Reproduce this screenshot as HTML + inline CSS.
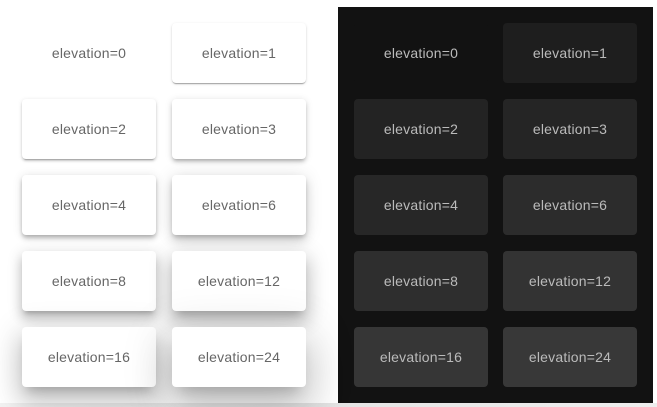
<!DOCTYPE html><html><head><style>
body{margin:0;width:657px;height:407px;background:#fff;position:relative;overflow:hidden;font-family:"Liberation Sans",sans-serif}
.p{position:absolute;width:134px;height:60px;border-radius:4px;display:flex;align-items:center;justify-content:center;font-size:14px;letter-spacing:0.2px}
.l{background:#fff;color:#666}
.d{color:#bbb}
#dk{position:absolute;left:338px;top:7px;width:315px;height:396px;background:#121212}
#bt{position:absolute;left:0;top:403px;width:657px;height:4px;background:linear-gradient(90deg,#f2f2f2,#e4e4e4 50%,#eee)}
</style></head><body>
<div id="bt"></div>
<div id="dk"></div>
<div class="p l" style="left:22px;top:23px">elevation=0</div>
<div class="p l" style="left:172px;top:23px;box-shadow:0 2px 1px -1px rgba(0,0,0,.2),0 1px 1px 0 rgba(0,0,0,.14),0 1px 3px 0 rgba(0,0,0,.12)">elevation=1</div>
<div class="p l" style="left:22px;top:99px;box-shadow:0 3px 1px -2px rgba(0,0,0,.2),0 2px 2px 0 rgba(0,0,0,.14),0 1px 5px 0 rgba(0,0,0,.12)">elevation=2</div>
<div class="p l" style="left:172px;top:99px;box-shadow:0 3px 3px -2px rgba(0,0,0,.2),0 3px 4px 0 rgba(0,0,0,.14),0 1px 8px 0 rgba(0,0,0,.12)">elevation=3</div>
<div class="p l" style="left:22px;top:175px;box-shadow:0 2px 4px -1px rgba(0,0,0,.2),0 4px 5px 0 rgba(0,0,0,.14),0 1px 10px 0 rgba(0,0,0,.12)">elevation=4</div>
<div class="p l" style="left:172px;top:175px;box-shadow:0 3px 5px -1px rgba(0,0,0,.2),0 6px 10px 0 rgba(0,0,0,.14),0 1px 18px 0 rgba(0,0,0,.12)">elevation=6</div>
<div class="p l" style="left:22px;top:251px;box-shadow:0 5px 5px -3px rgba(0,0,0,.2),0 8px 10px 1px rgba(0,0,0,.14),0 3px 14px 2px rgba(0,0,0,.12)">elevation=8</div>
<div class="p l" style="left:172px;top:251px;box-shadow:0 7px 8px -4px rgba(0,0,0,.2),0 12px 17px 2px rgba(0,0,0,.14),0 5px 22px 4px rgba(0,0,0,.12)">elevation=12</div>
<div class="p l" style="left:22px;top:327px;box-shadow:0 8px 10px -5px rgba(0,0,0,.2),0 16px 24px 2px rgba(0,0,0,.14),0 6px 30px 5px rgba(0,0,0,.12)">elevation=16</div>
<div class="p l" style="left:172px;top:327px;box-shadow:0 11px 15px -7px rgba(0,0,0,.2),0 24px 38px 3px rgba(0,0,0,.14),0 9px 46px 8px rgba(0,0,0,.12)">elevation=24</div>
<div class="p d" style="left:354px;top:23px;background:#121212">elevation=0</div>
<div class="p d" style="left:503px;top:23px;background:#1e1e1e">elevation=1</div>
<div class="p d" style="left:354px;top:99px;background:#232323">elevation=2</div>
<div class="p d" style="left:503px;top:99px;background:#252525">elevation=3</div>
<div class="p d" style="left:354px;top:175px;background:#272727">elevation=4</div>
<div class="p d" style="left:503px;top:175px;background:#2c2c2c">elevation=6</div>
<div class="p d" style="left:354px;top:251px;background:#2e2e2e">elevation=8</div>
<div class="p d" style="left:503px;top:251px;background:#333">elevation=12</div>
<div class="p d" style="left:354px;top:327px;background:#363636">elevation=16</div>
<div class="p d" style="left:503px;top:327px;background:#383838">elevation=24</div>
</body></html>
